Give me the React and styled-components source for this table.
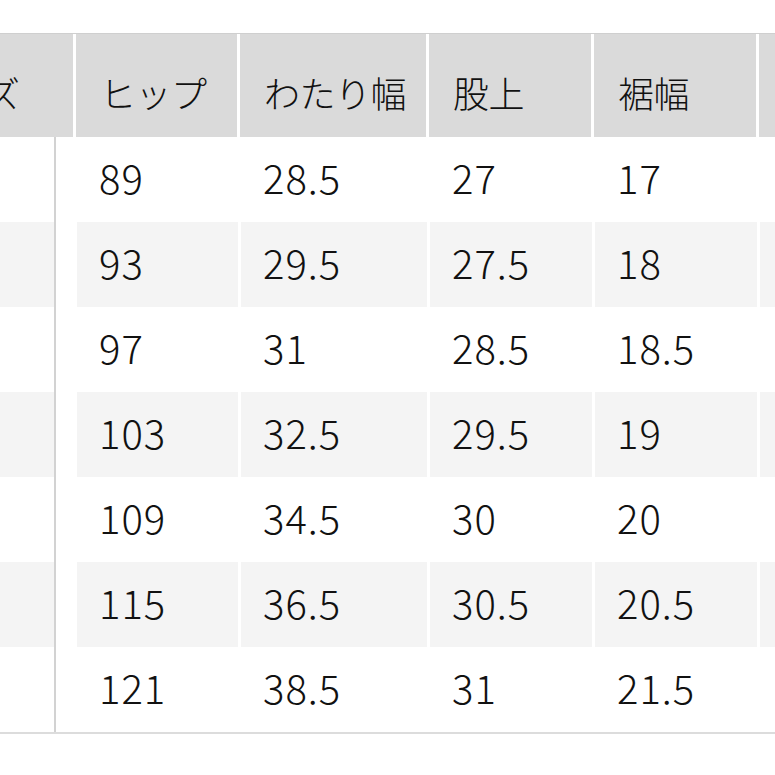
import React from 'react';
import styled, { createGlobalStyle } from 'styled-components';

const GlobalStyle = createGlobalStyle`
  html, body {
    margin: 0;
    padding: 0;
    background: #ffffff;
  }
  body {
    font-family: "Noto Sans CJK JP", "Noto Sans", sans-serif;
    color: #1c1c1c;
  }
`;

const Page = styled.div`
  width: 775px;
  height: 775px;
  overflow: hidden;
  padding-top: 33px;
  box-sizing: border-box;
  background: #ffffff;
`;

// the table is scrolled sideways, so its first column sits partly off screen
const Table = styled.div`
  margin-left: -110px;
  width: 1100px;
  border-bottom: 2px solid #dcdcdc;
`;

const HeadRow = styled.div`
  display: grid;
  grid-template-columns: 183px 161px 186px 162px 162px 200px;
  column-gap: 3px;
  height: 104px;
  border-top: 1px solid #cfcfcf;
  box-sizing: border-box;
`;

const HeadCell = styled.div`
  display: flex;
  align-items: center;
  padding: 12px 0 0 24px;
  background: #dadada;
  font-size: 36px;
  font-weight: 300;
  letter-spacing: -0.5px;
  white-space: nowrap;
  color: #111;
`;

const BodyRow = styled.div`
  display: grid;
  grid-template-columns: 163px 18px 161px 186px 162px 162px 200px;
  column-gap: 3px;
  height: 85px;
`;

const StickyCell = styled.div`
  margin-right: -3px;
  background: ${(p) => (p.shaded ? '#f4f4f4' : '#ffffff')};
  border-right: 2px solid #d2d2d2;
`;

const Filler = styled.div`
  background: #ffffff;
  margin-left: 3px;
`;

const Cell = styled.div`
  display: flex;
  align-items: center;
  padding: 0 0 6px 22px;
  background: ${(p) => (p.shaded ? '#f4f4f4' : '#ffffff')};
  font-size: 40px;
  font-weight: 300;
  letter-spacing: 1px;
  white-space: nowrap;
  color: #111;
`;

const headers = ['サイズ', 'ヒップ', 'わたり幅', '股上', '裾幅', ''];

const rows = [
  ['89', '28.5', '27', '17', ''],
  ['93', '29.5', '27.5', '18', ''],
  ['97', '31', '28.5', '18.5', ''],
  ['103', '32.5', '29.5', '19', ''],
  ['109', '34.5', '30', '20', ''],
  ['115', '36.5', '30.5', '20.5', ''],
  ['121', '38.5', '31', '21.5', ''],
];

export default function App() {
  return (
    <Page>
      <GlobalStyle />
      <Table>
        <HeadRow>
          {headers.map((h, i) => (
            <HeadCell key={i}>{h}</HeadCell>
          ))}
        </HeadRow>
        {rows.map((r, i) => {
          const shaded = i % 2 === 1;
          return (
            <BodyRow key={r[0]}>
              <StickyCell shaded={shaded} />
              <Filler />
              {r.map((v, j) => (
                <Cell key={j} shaded={shaded}>
                  {v}
                </Cell>
              ))}
            </BodyRow>
          );
        })}
      </Table>
    </Page>
  );
}
